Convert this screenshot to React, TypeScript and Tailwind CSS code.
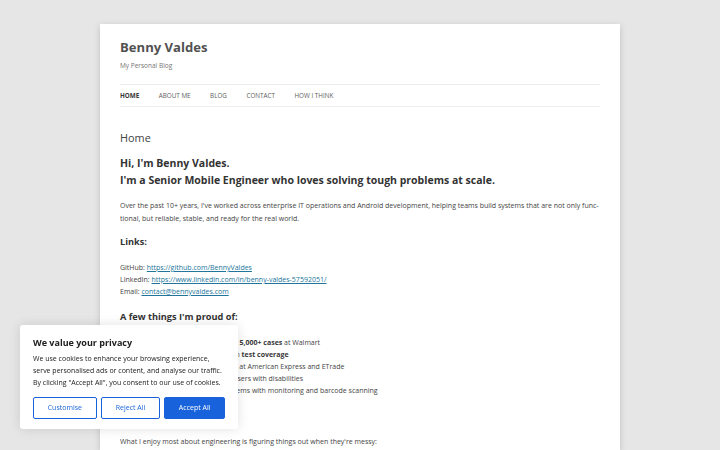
const nav = ['Home', 'About Me', 'Blog', 'Contact', 'How I Think'];

const proud = [
  <>Reduced support escalations by <strong className="text-[#373737]">5,000+ cases</strong> at Walmart</>,
  <>Delivered Android products with <strong className="text-[#373737]">test coverage</strong></>,
  <>Supported enterprise platforms at American Express and ETrade</>,
  <>Improved app accessibility for users with disabilities</>,
  <>Stabilized retail warehouse systems with monitoring and barcode scanning</>,
];

function CookieBanner() {
  return (
    <div className="fixed left-[20px] bottom-[21px] w-[218px] bg-white rounded-[3px] shadow-[0_0_12px_rgba(0,0,0,0.12)] px-[13px] pt-[11px] pb-[10px]">
      <p className="text-[9px] leading-[14px] font-bold text-[#212121]">We value your privacy</p>
      <p className="mt-[3px] text-[7px] leading-[12px] text-[#212121]">
        We use cookies to enhance your browsing experience,
        <br />
        serve personalised ads or content, and analyse our traffic.
        <br />
        By clicking "Accept All", you consent to our use of cookies.
      </p>
      <div className="mt-[8px] flex gap-[4.5px]">
        <button className="w-[64px] h-[22px] border-[1.5px] border-[#1863dc] rounded-[2px] text-[7px] text-[#1863dc]">Customise</button>
        <button className="w-[59px] h-[22px] border-[1.5px] border-[#1863dc] rounded-[2px] text-[7px] text-[#1863dc]">Reject All</button>
        <button className="w-[61px] h-[22px] border-[1.5px] border-[#1863dc] bg-[#1863dc] rounded-[2px] text-[7px] text-white">Accept All</button>
      </div>
    </div>
  );
}

export default function App() {
  return (
    <div className="min-h-[450px] bg-[#e6e6e6] pt-[24px] font-['Open_Sans',sans-serif] text-[#444]">
      <div className="mx-auto w-[520px] min-h-[426px] bg-white px-[20px] pt-[13px] shadow-[0_2px_6px_rgba(100,100,100,0.3)]">
        <header>
          <h1 className="text-[13.1px] leading-[20px] font-bold text-[#515151]">Benny Valdes</h1>
          <p className="mt-[3px] text-[6.5px] leading-[12px] text-[#757575]">My Personal Blog</p>
          <nav className="mt-[12px] border-y border-[#ededed] h-[23px] flex items-center gap-[19.5px] uppercase text-[6.3px] text-[#5e5e5e]">
            {nav.map((n, i) => (
              <span key={n} className={i === 0 ? 'font-bold text-[#373737]' : ''}>{n}</span>
            ))}
          </nav>
        </header>

        <article>
          <h2 className="mt-[23px] text-[10.9px] leading-[16px] text-[#444]">Home</h2>
          <h3 className="mt-[9px] text-[10.5px] leading-[17px] font-bold text-[#333]">
            Hi, I'm Benny Valdes.
            <br />
            I'm a Senior Mobile Engineer who loves solving tough problems at scale.
          </h3>
          <p className="mt-[9.5px] text-[7px] leading-[13px] whitespace-nowrap">
            <span className="block">Over the past 10+ years, I've worked across enterprise IT operations and Android development, helping teams build systems that are not only func-</span>
            <span className="block">tional, but reliable, stable, and ready for the real world.</span>
          </p>
          <h4 className="mt-[10.5px] text-[9.2px] leading-[14px] font-bold text-[#333]">Links:</h4>
          <p className="mt-[13px] text-[7px] leading-[12px]">
            GitHub: <a className="text-[#21759b] underline">https://github.com/BennyValdes</a>
            <br />
            LinkedIn: <a className="text-[#21759b] underline">https://www.linkedin.com/in/benny-valdes-57592051/</a>
            <br />
            Email: <a className="text-[#21759b] underline">contact@bennyvaldes.com</a>
          </p>
          <h4 className="mt-[12px] text-[9.2px] leading-[14px] font-bold text-[#333]">A few things I'm proud of:</h4>
          <ul className="mt-[13px] ml-[14px] list-disc text-[7px] leading-[12px]">
            {proud.map((p, i) => (
              <li key={i}>{p}</li>
            ))}
          </ul>
          <p className="mt-[37.5px] text-[7px] leading-[13px]">
            What I enjoy most about engineering is figuring things out when they're messy:
          </p>
        </article>
      </div>
      <CookieBanner />
    </div>
  );
}
